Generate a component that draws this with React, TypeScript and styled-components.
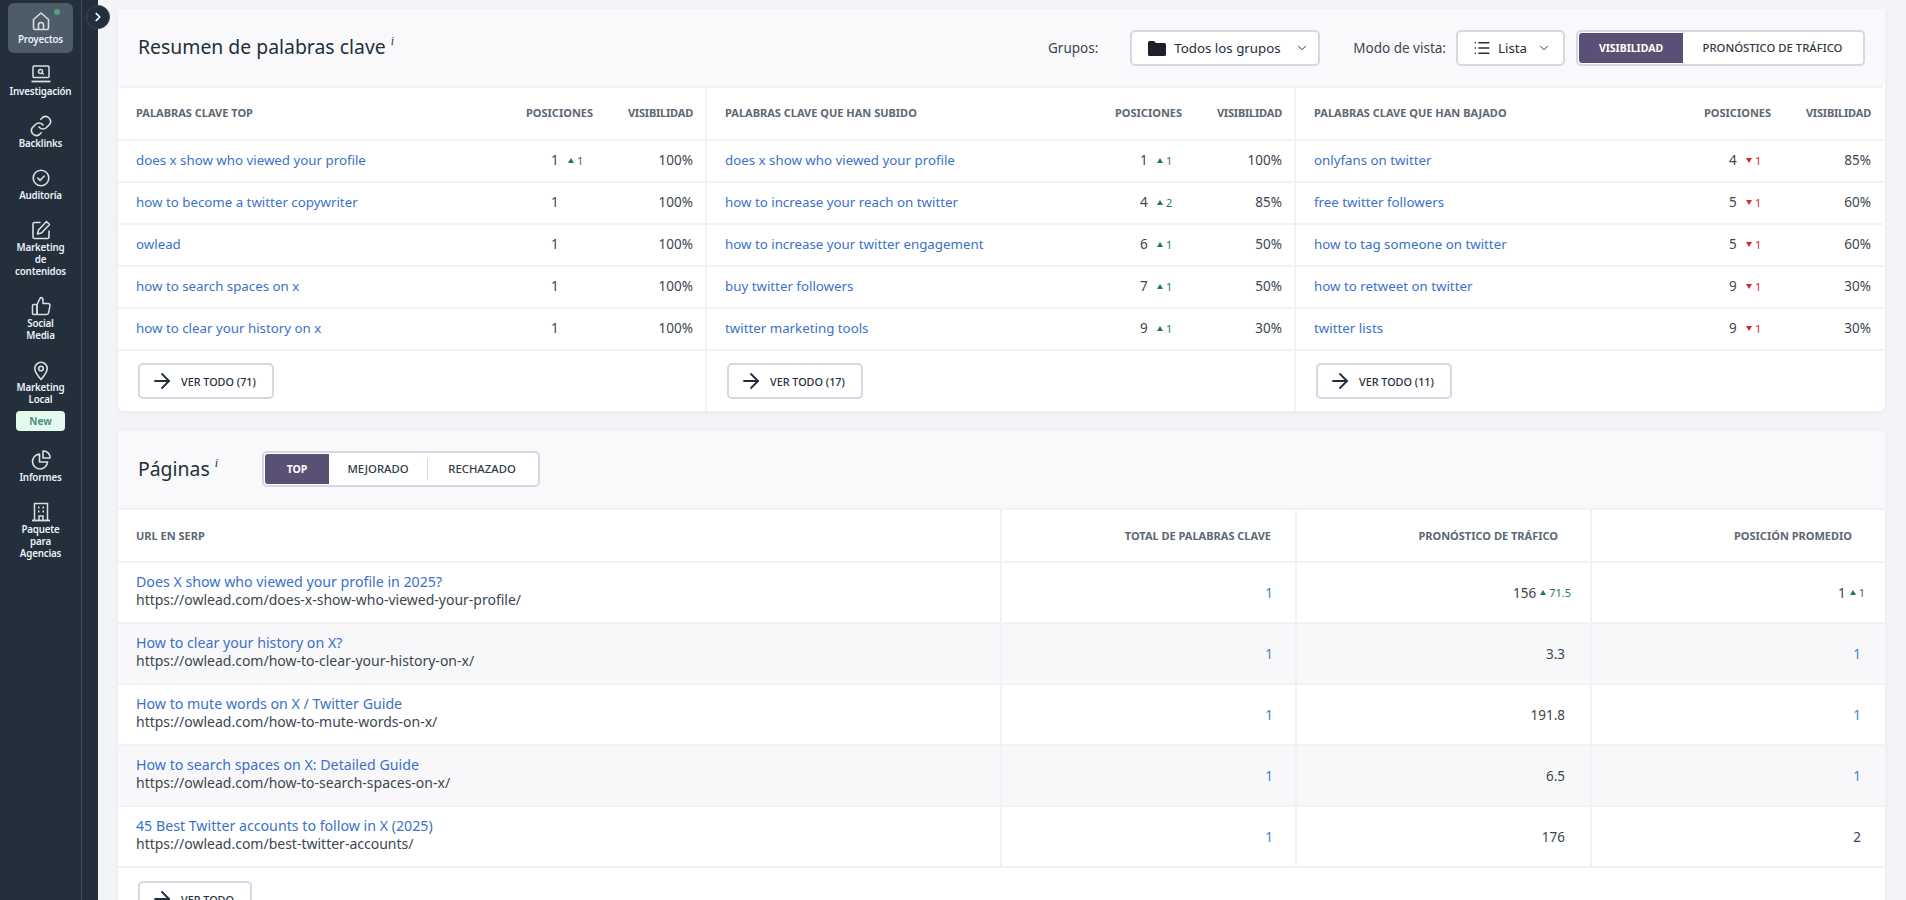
import * as React from 'react'
import styled, { createGlobalStyle } from 'styled-components'
import { ArrowRight, ChevronDown, ChevronRight, List } from 'lucide-react'

const GlobalStyle = createGlobalStyle`
  html, body {
    margin: 0;
    height: 100%;
    overflow: hidden;
    background: #f3f4f8;
    font-family: "Noto Sans", "Liberation Sans", sans-serif;
    color: #3c4650;
  }
  * { box-sizing: border-box; }
`

const Page = styled.div`
  display: flex;
  height: 100vh;
  overflow: hidden;
  position: relative;
`

const Sidebar = styled.aside`
  flex: 0 0 98px;
  background: #232f3b;
`

const Rail = styled.nav`
  width: 82px;
  height: 100%;
  padding: 2px 8px 0;
  border-right: 1px solid #424e5a;
  display: flex;
  flex-direction: column;
`

const NavItem = styled.a<{ $active?: boolean }>`
  position: relative;
  display: flex;
  flex-direction: column;
  align-items: center;
  margin: 1px 0;
  padding: 7px 0;
  border-radius: 6px;
  color: #d9dee3;
  background: ${p => (p.$active ? '#4e5b69' : 'transparent')};
  svg { display: block; }
`

const NavLabel = styled.span`
  display: block;
  font-size: 9.8px;
  letter-spacing: -0.2px;
  line-height: 12px;
  font-weight: 600;
  text-align: center;
  color: #e8f0f6;
  white-space: pre-line;
`

const StatusDot = styled.span`
  position: absolute;
  top: 6px;
  right: 13px;
  width: 6px;
  height: 6px;
  border-radius: 50%;
  background: #4fa37f;
`

const NewBadge = styled.span`
  margin-top: 5px;
  margin-bottom: 1px;
  width: 49px;
  height: 20px;
  border-radius: 4px;
  background: #e6f9ee;
  color: #4d8f84;
  font-size: 10px;
  font-weight: 700;
  line-height: 20px;
  text-align: center;
`

const Toggle = styled.button`
  position: absolute;
  left: 86px;
  top: 5px;
  width: 24px;
  height: 24px;
  padding: 0;
  border-radius: 50%;
  border: 1px solid #3c4854;
  background: #232f3b;
  color: #fff;
  display: flex;
  align-items: center;
  justify-content: center;
`

const Main = styled.main`
  flex: 1;
  min-width: 0;
  padding: 9px 21px 0 20px;
  display: flex;
  flex-direction: column;
  gap: 20px;
`

const Card = styled.section`
  background: #fff;
  border-radius: 0 0 6px 6px;
  box-shadow: 0 2px 6px rgba(40, 50, 80, 0.05);
`

const CardHeader = styled.header`
  height: 77px;
  padding: 0 20px;
  background: #f9f9fc;
  display: flex;
  align-items: center;
`

const Title = styled.h2`
  margin: 0 0 2px;
  font-size: 19.4px;
  line-height: 26px;
  font-weight: 400;
  color: #232f3b;
  sup {
    font-family: "Liberation Serif", serif;
    font-style: italic;
    font-size: 12px;
    line-height: 0;
    margin-left: 5px;
    vertical-align: 9px;
  }
`

const Controls = styled.div`
  margin-left: auto;
  display: flex;
  align-items: center;
`

const ControlLabel = styled.span<{ $gap: number }>`
  font-size: 13.5px;
  color: #3c4650;
  margin-right: ${p => p.$gap}px;
`

const SelectButton = styled.button<{ $width: number; $after: number }>`
  width: ${p => p.$width}px;
  height: 36px;
  margin-right: ${p => p.$after}px;
  padding: 0 0 0 15px;
  border: 2px solid #d5d7e3;
  border-radius: 5px;
  background: #fff;
  display: flex;
  align-items: center;
  gap: 7px;
  font-family: inherit;
  font-size: 13.3px;
  color: #232f3b;
  white-space: nowrap;
`

const Segmented = styled.div<{ $inline?: boolean }>`
  height: 36px;
  padding: 1px;
  margin: ${p => (p.$inline ? '-2px 0 0 44px' : '0')};
  border: 2px solid #d5d7e3;
  border-radius: 5px;
  background: #fff;
  display: flex;
  align-items: stretch;
`

const Segment = styled.button<{ $active?: boolean; $width: number; $divider?: boolean }>`
  width: ${p => p.$width}px;
  padding: 0;
  border: 0;
  border-radius: 3px 0 0 3px;
  position: relative;
  background: ${p => (p.$active ? '#5a5075' : 'transparent')};
  color: ${p => (p.$active ? '#fff' : '#2f3a45')};
  font-family: inherit;
  font-size: ${p => (p.$active ? '10.5px' : '11.3px')};
  font-weight: ${p => (p.$active ? 700 : 500)};
  white-space: nowrap;
  &::before {
    content: '';
    display: ${p => (p.$divider ? 'block' : 'none')};
    position: absolute;
    left: 0;
    top: 4px;
    bottom: 4px;
    width: 1px;
    background: #d5d7e3;
  }
`

const Columns = styled.div`
  display: grid;
  grid-template-columns: repeat(3, 1fr);
`

const Column = styled.div`
  border-right: 2px solid #f1f2f6;
  &:last-child { border-right-color: transparent; }
`

const KeywordHead = styled.div`
  height: 55px;
  padding: 0 12px 2px 18px;
  border-top: 2px solid #f1f2f6;
  border-bottom: 2px solid #f1f2f6;
  display: grid;
  grid-template-columns: 1fr 67px 100px;
  align-items: center;
`

const KeywordRow = styled(KeywordHead)`
  height: 42px;
  border-top: 0;
  padding-bottom: 2px;
`

const HeadText = styled.span<{ $right?: boolean }>`
  font-size: 11px;
  font-weight: 700;
  color: #5c6873;
  white-space: nowrap;
  text-align: ${p => (p.$right ? 'right' : 'left')};
  letter-spacing: ${p => (p.$right ? '-0.2px' : '0')};
`

const LinkText = styled.a`
  font-size: 13.3px;
  line-height: 18px;
  color: #3b71ca;
  white-space: nowrap;
`

const PageTitle = styled(LinkText)`
  font-size: 14.2px;
`

const Position = styled.span`
  display: flex;
  align-items: center;
  padding-left: 25px;
  font-size: 13.5px;
  color: #3c4650;
  white-space: nowrap;
`

const PositionValue = styled.span`
  width: 17px;
`

const Delta = styled.span<{ $down?: boolean }>`
  display: inline-flex;
  align-items: center;
  gap: 3px;
  font-size: 11px;
  color: ${p => (p.$down ? '#d9262f' : '#1f7a5c')};
`

const Triangle = styled.i<{ $down?: boolean }>`
  width: 0;
  height: 0;
  border-left: 3.5px solid transparent;
  border-right: 3.5px solid transparent;
  border-top: ${p => (p.$down ? '5px solid #d9262f' : '0')};
  border-bottom: ${p => (p.$down ? '0' : '5px solid #1f7a5c')};
`

const Percent = styled.span`
  font-size: 13.5px;
  color: #3c4650;
  text-align: right;
`

const ColumnFooter = styled.div`
  height: 60px;
  padding: 12px 20px 0;
`

const ViewAll = styled.button`
  height: 36px;
  padding: 0 16px 0 10px;
  border: 2px solid #d5d7e3;
  border-radius: 5px;
  background: #fff;
  display: inline-flex;
  align-items: center;
  gap: 7px;
  font-family: inherit;
  font-size: 10.8px;
  font-weight: 500;
  color: #232f3b;
  white-space: nowrap;
`

const PagesHead = styled.div`
  height: 55px;
  border-top: 2px solid #f1f2f6;
  border-bottom: 2px solid #f1f2f6;
  display: grid;
  grid-template-columns: 1fr 295px 295px 295px;
`

const PagesRow = styled(PagesHead)<{ $shaded?: boolean }>`
  height: 61px;
  border-top: 0;
  background: ${p => (p.$shaded ? '#f8f8fb' : '#fff')};
`

const Cell = styled.div<{ $pad?: number; $right?: boolean }>`
  display: flex;
  flex-direction: column;
  justify-content: center;
  align-items: ${p => (p.$right ? 'flex-end' : 'flex-start')};
  padding: ${p => (p.$right ? `0 ${p.$pad ?? 24}px 0 0` : '0 0 0 18px')};
  border-left: ${p => (p.$right ? '2px solid #f1f2f6' : '0')};
`

const PageCell = styled(Cell)`
  padding-bottom: 3px;
`

const UrlText = styled.span`
  font-size: 14px;
  line-height: 18px;
  color: #3c4650;
  white-space: nowrap;
`

const ValueLine = styled.span<{ $link?: boolean }>`
  display: inline-flex;
  align-items: center;
  gap: 4px;
  font-size: 13.5px;
  color: ${p => (p.$link ? '#3f87c5' : '#3c4650')};
`

const PagesFooter = styled.div`
  padding: 13px 20px 0;
`

const HouseIcon = () => (
  <svg width="24" height="24" viewBox="0 0 24 24" fill="none" stroke="currentColor" strokeWidth="1.6" strokeLinejoin="round">
    <path d="M4.500 9.500 12 3l7.500 6.500V18a1.500 1.500 0 0 1-1.500 1.500H6A1.500 1.500 0 0 1 4.500 18z" />
    <path d="M9.500 19.500V15a2.500 2.500 0 0 1 5 0v4.500" />
  </svg>
)

const LaptopIcon = () => (
  <svg width="24" height="24" viewBox="0 0 24 24" fill="none" stroke="currentColor" strokeWidth="1.5">
    <rect x="4" y="4" width="16" height="11.500" rx="1" />
    <path d="M2.500 19.500h19" strokeWidth="1.800" />
    <circle cx="11.500" cy="9.500" r="2" />
    <path d="m13 11 1.800 1.500" />
  </svg>
)

const LinkIcon = () => (
  <svg width="24" height="24" viewBox="0 0 24 24" fill="none" stroke="currentColor" strokeWidth="1.6" strokeLinecap="round" strokeLinejoin="round">
    <path d="M10 13a5 5 0 0 0 7.500.5l3-3a5 5 0 0 0-7-7l-1.700 1.700" />
    <path d="M14 11a5 5 0 0 0-7.500-.5l-3 3a5 5 0 0 0 7 7l1.700-1.700" />
  </svg>
)

const CheckIcon = () => (
  <svg width="24" height="24" viewBox="0 0 24 24" fill="none" stroke="currentColor" strokeWidth="1.600" strokeLinecap="round" strokeLinejoin="round">
    <circle cx="12" cy="12" r="7.800" />
    <path d="m8.800 12.200 2.300 2.200 4.200-4.400" />
  </svg>
)

const PenIcon = () => (
  <svg width="24" height="24" viewBox="0 0 24 24" fill="none" stroke="currentColor" strokeWidth="1.600" strokeLinecap="round" strokeLinejoin="round">
    <path d="M11 4.500H5.500a1.500 1.500 0 0 0-1.500 1.500v13a1.500 1.500 0 0 0 1.500 1.500h13a1.500 1.500 0 0 0 1.500-1.500v-6" />
    <path d="M17.500 3.500 20.500 6.500 12.500 15l-4 1 1-4z" />
  </svg>
)

const ThumbIcon = () => (
  <svg width="24" height="24" viewBox="0 0 24 24" fill="none" stroke="currentColor" strokeWidth="1.500" strokeLinecap="round" strokeLinejoin="round">
    <path d="M8 20.500V10.500l3.500-7c1.500 0 2.500 1.200 2.500 2.700V9.500h5.200a1.800 1.800 0 0 1 1.800 2.200l-1.400 7a2 2 0 0 1-2 1.800z" />
    <rect x="3.500" y="10.500" width="4.500" height="10" rx="1" />
  </svg>
)

const PinIcon = () => (
  <svg width="24" height="24" viewBox="0 0 24 24" fill="none" stroke="currentColor" strokeWidth="1.600" strokeLinejoin="round">
    <path d="M12 21.500c-3.500-4-6.200-7.300-6.200-11a6.200 6.200 0 0 1 12.400 0c0 3.700-2.700 7-6.200 11z" />
    <circle cx="12" cy="10.500" r="2.300" />
  </svg>
)

const ChartIcon = () => (
  <svg width="24" height="24" viewBox="0 0 24 24" fill="none" stroke="currentColor" strokeWidth="1.600" strokeLinejoin="round">
    <path d="M10.500 6a7.500 7.500 0 1 0 8 8h-8z" />
    <path d="M14 3a6.500 6.500 0 0 1 7 7h-7z" />
  </svg>
)

const BuildingIcon = () => (
  <svg width="24" height="24" viewBox="0 0 24 24" fill="none" stroke="currentColor" strokeWidth="1.500">
    <path d="M5.500 20.500V3.500h13v17" />
    <path d="M3 20.500h18" strokeWidth="1.800" />
    <path d="M10 20.500v-4.500h4v4.500" />
    <path d="M9 7.500h1.500M13.500 7.500H15M9 11.500h1.500M13.500 11.500H15" strokeWidth="1.800" />
  </svg>
)

const FolderIcon = () => (
  <svg width="20" height="20" viewBox="0 0 20 20" fill="#1d1f2e">
    <path d="M1 4.500A1.500 1.500 0 0 1 2.500 3H7l2 2h8.500A1.500 1.500 0 0 1 19 6.500v10a1.500 1.500 0 0 1-1.500 1.500h-15A1.500 1.500 0 0 1 1 16.500z" />
  </svg>
)

const navItems: { label: string; icon: React.ReactNode; active?: boolean; badge?: boolean }[] = [
  { label: 'Proyectos', icon: <HouseIcon />, active: true },
  { label: 'Investigación', icon: <LaptopIcon /> },
  { label: 'Backlinks', icon: <LinkIcon /> },
  { label: 'Auditoría', icon: <CheckIcon /> },
  { label: 'Marketing\nde\ncontenidos', icon: <PenIcon /> },
  { label: 'Social\nMedia', icon: <ThumbIcon /> },
  { label: 'Marketing\nLocal', icon: <PinIcon />, badge: true },
  { label: 'Informes', icon: <ChartIcon /> },
  { label: 'Paquete\npara\nAgencias', icon: <BuildingIcon /> },
]

type KeywordRowData = { keyword: string; position: number; delta?: number; visibility: string }

const keywordColumns: { title: string; total: number; down?: boolean; rows: KeywordRowData[] }[] = [
  {
    title: 'PALABRAS CLAVE TOP',
    total: 71,
    rows: [
      { keyword: 'does x show who viewed your profile', position: 1, delta: 1, visibility: '100%' },
      { keyword: 'how to become a twitter copywriter', position: 1, visibility: '100%' },
      { keyword: 'owlead', position: 1, visibility: '100%' },
      { keyword: 'how to search spaces on x', position: 1, visibility: '100%' },
      { keyword: 'how to clear your history on x', position: 1, visibility: '100%' },
    ],
  },
  {
    title: 'PALABRAS CLAVE QUE HAN SUBIDO',
    total: 17,
    rows: [
      { keyword: 'does x show who viewed your profile', position: 1, delta: 1, visibility: '100%' },
      { keyword: 'how to increase your reach on twitter', position: 4, delta: 2, visibility: '85%' },
      { keyword: 'how to increase your twitter engagement', position: 6, delta: 1, visibility: '50%' },
      { keyword: 'buy twitter followers', position: 7, delta: 1, visibility: '50%' },
      { keyword: 'twitter marketing tools', position: 9, delta: 1, visibility: '30%' },
    ],
  },
  {
    title: 'PALABRAS CLAVE QUE HAN BAJADO',
    total: 11,
    down: true,
    rows: [
      { keyword: 'onlyfans on twitter', position: 4, delta: 1, visibility: '85%' },
      { keyword: 'free twitter followers', position: 5, delta: 1, visibility: '60%' },
      { keyword: 'how to tag someone on twitter', position: 5, delta: 1, visibility: '60%' },
      { keyword: 'how to retweet on twitter', position: 9, delta: 1, visibility: '30%' },
      { keyword: 'twitter lists', position: 9, delta: 1, visibility: '30%' },
    ],
  },
]

const pages = [
  { title: 'Does X show who viewed your profile in 2025?', url: 'https://owlead.com/does-x-show-who-viewed-your-profile/', traffic: '156', trafficDelta: '71.5', position: '1', positionDelta: '1' },
  { title: 'How to clear your history on X?', url: 'https://owlead.com/how-to-clear-your-history-on-x/', traffic: '3.3', position: '1' },
  { title: 'How to mute words on X / Twitter Guide', url: 'https://owlead.com/how-to-mute-words-on-x/', traffic: '191.8', position: '1' },
  { title: 'How to search spaces on X: Detailed Guide', url: 'https://owlead.com/how-to-search-spaces-on-x/', traffic: '6.5', position: '1' },
  { title: '45 Best Twitter accounts to follow in X (2025)', url: 'https://owlead.com/best-twitter-accounts/', traffic: '176', position: '2' },
]

const App: React.FC = () => {
  return (
    <Page>
      <GlobalStyle />
      <Sidebar>
        <Rail>
          {navItems.map(item => (
            <NavItem key={item.label} $active={item.active}>
              {item.active && <StatusDot />}
              {item.icon}
              <NavLabel>{item.label}</NavLabel>
              {item.badge && <NewBadge>New</NewBadge>}
            </NavItem>
          ))}
        </Rail>
      </Sidebar>
      <Toggle>
        <ChevronRight size={14} strokeWidth={3} />
      </Toggle>
      <Main>
        <Card>
          <CardHeader>
            <Title>
              Resumen de palabras clave<sup>i</sup>
            </Title>
            <Controls>
              <ControlLabel $gap={32}>Grupos:</ControlLabel>
              <SelectButton $width={190} $after={33}>
                <FolderIcon />
                Todos los grupos
                <ChevronDown size={14} strokeWidth={1.6} style={{ marginLeft: 7 }} />
              </SelectButton>
              <ControlLabel $gap={10}>Modo de vista:</ControlLabel>
              <SelectButton $width={109} $after={11}>
                <List size={18} strokeWidth={2.2} />
                Lista
                <ChevronDown size={14} strokeWidth={1.6} style={{ marginLeft: 3 }} />
              </SelectButton>
              <Segmented>
                <Segment $active $width={104}>VISIBILIDAD</Segment>
                <Segment $width={179}>PRONÓSTICO DE TRÁFICO</Segment>
              </Segmented>
            </Controls>
          </CardHeader>
          <Columns>
            {keywordColumns.map(col => (
              <Column key={col.title}>
                <KeywordHead>
                  <HeadText>{col.title}</HeadText>
                  <HeadText>POSICIONES</HeadText>
                  <HeadText $right>VISIBILIDAD</HeadText>
                </KeywordHead>
                {col.rows.map(row => (
                  <KeywordRow key={row.keyword}>
                    <LinkText>{row.keyword}</LinkText>
                    <Position>
                      <PositionValue>{row.position}</PositionValue>
                      {row.delta !== undefined && (
                        <Delta $down={col.down}>
                          <Triangle $down={col.down} />
                          {row.delta}
                        </Delta>
                      )}
                    </Position>
                    <Percent>{row.visibility}</Percent>
                  </KeywordRow>
                ))}
                <ColumnFooter>
                  <ViewAll>
                    <ArrowRight size={24} strokeWidth={1.8} />
                    VER TODO ({col.total})
                  </ViewAll>
                </ColumnFooter>
              </Column>
            ))}
          </Columns>
        </Card>
        <Card>
          <CardHeader>
            <Title>
              Páginas<sup>i</sup>
            </Title>
            <Segmented $inline>
              <Segment $active $width={64}>TOP</Segment>
              <Segment $width={98}>MEJORADO</Segment>
              <Segment $divider $width={110}>RECHAZADO</Segment>
            </Segmented>
          </CardHeader>
          <PagesHead>
            <Cell><HeadText>URL EN SERP</HeadText></Cell>
            <Cell $right><HeadText>TOTAL DE PALABRAS CLAVE</HeadText></Cell>
            <Cell $right $pad={32}><HeadText>PRONÓSTICO DE TRÁFICO</HeadText></Cell>
            <Cell $right $pad={33}><HeadText>POSICIÓN PROMEDIO</HeadText></Cell>
          </PagesHead>
          {pages.map((page, i) => (
            <PagesRow key={page.url} $shaded={i % 2 === 1}>
              <PageCell>
                <PageTitle>{page.title}</PageTitle>
                <UrlText>{page.url}</UrlText>
              </PageCell>
              <Cell $right $pad={22}>
                <ValueLine $link>1</ValueLine>
              </Cell>
              <Cell $right $pad={page.trafficDelta ? 19 : 25}>
                <ValueLine>
                  {page.traffic}
                  {page.trafficDelta && (
                    <Delta>
                      <Triangle />
                      {page.trafficDelta}
                    </Delta>
                  )}
                </ValueLine>
              </Cell>
              <Cell $right $pad={page.positionDelta ? 20 : 24}>
                <ValueLine $link={page.position === '1' && !page.positionDelta}>
                  {page.position}
                  {page.positionDelta && (
                    <Delta>
                      <Triangle />
                      {page.positionDelta}
                    </Delta>
                  )}
                </ValueLine>
              </Cell>
            </PagesRow>
          ))}
          <PagesFooter>
            <ViewAll>
              <ArrowRight size={24} strokeWidth={1.8} />
              VER TODO
            </ViewAll>
          </PagesFooter>
        </Card>
      </Main>
    </Page>
  )
}

export default App
